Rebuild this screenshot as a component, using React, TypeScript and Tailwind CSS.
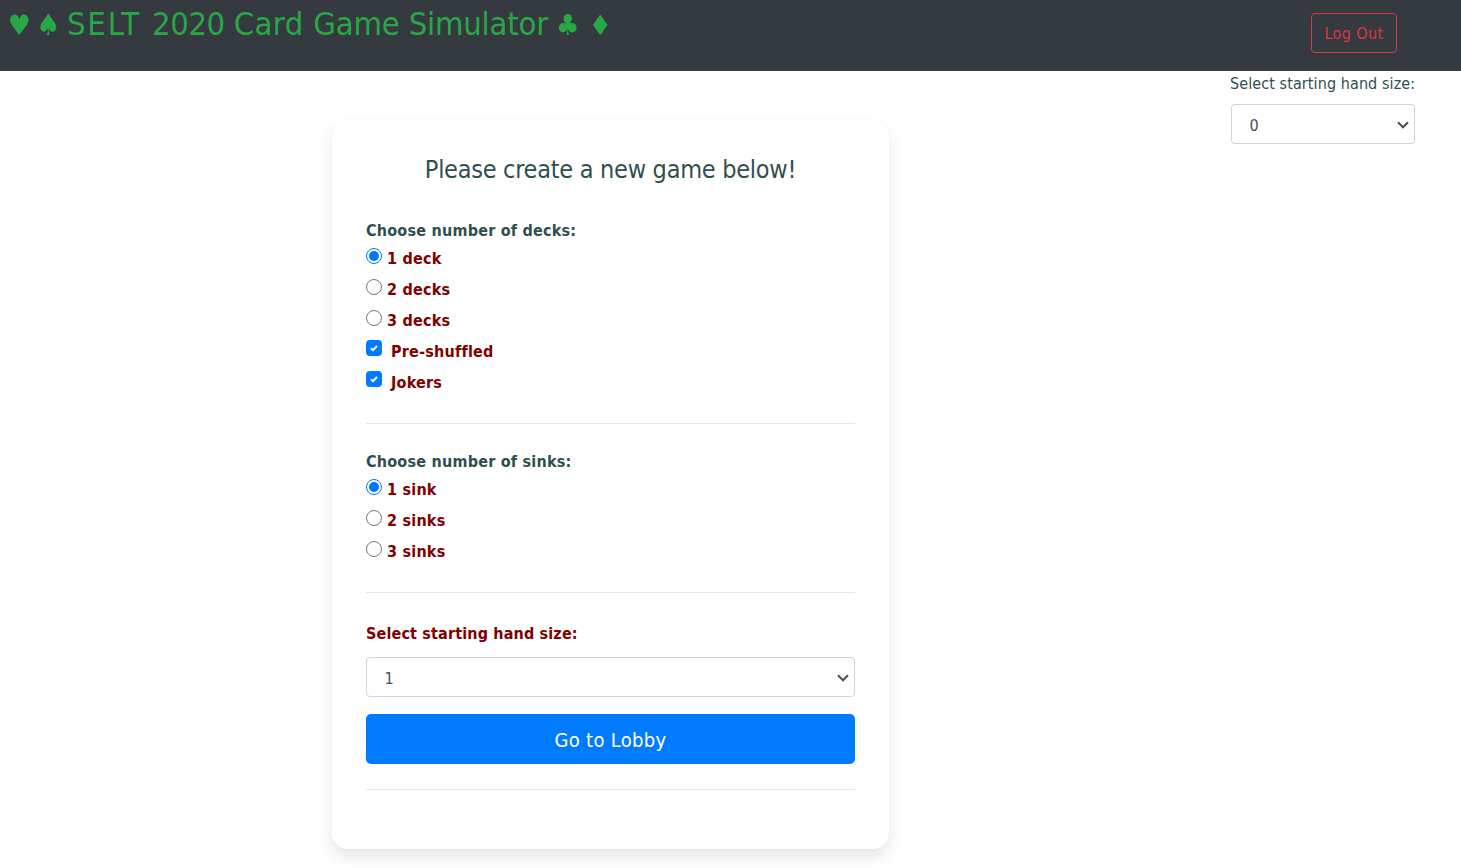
import React from "react";

function Chevron() {
  return (
    <svg className="pointer-events-none mt-0.5 h-2 w-3 shrink-0" viewBox="0 0 12 8" fill="none" stroke="#495057" strokeWidth="2">
      <path d="M1 1.3 L6 6.3 L11 1.3" />
    </svg>
  );
}

function SelectBox({ value }: { value: string }) {
  return (
    <button className="flex h-10 w-full items-center justify-between rounded border border-[#ced4da] bg-white pr-[5px] pl-[17.5px] text-left leading-6 text-[#495057]">
      <span className="pt-[3px]">{value}</span>
      <Chevron />
    </button>
  );
}

function Radio({ label, checked = false }: { label: string; checked?: boolean }) {
  return (
    <label className="flex h-[31px] items-start gap-[5px]">
      <svg className="h-4 w-4 shrink-0" viewBox="0 0 16 16">
        <circle cx="8" cy="8" r="7.5" fill="#fff" stroke={checked ? "#0075ff" : "#767676"} />
        {checked && <circle cx="8" cy="8" r="5" fill="#0075ff" />}
      </svg>
      <span className="-mt-px leading-6 text-[#800000]">{label}</span>
    </label>
  );
}

function Check({ label }: { label: string }) {
  return (
    <label className="flex h-[31px] items-start gap-[9px]">
      <svg className="-mt-px h-4 w-4 shrink-0" viewBox="0 0 16 16">
        <rect width="16" height="16" rx="4" fill="#007bff" />
        <path d="M4.9 8.3 L7 10.2 L11 6" fill="none" stroke="#fff" strokeWidth="1.9" />
      </svg>
      <span className="-mt-px leading-6 text-[#800000]">{label}</span>
    </label>
  );
}

export default function App() {
  return (
    <div className="h-[868px] overflow-hidden bg-white font-['DejaVu_Sans_Condensed','DejaVu_Sans',sans-serif] text-base text-[#2f4f4f]">
      <header className="flex h-[71px] items-start justify-between bg-[#343a40] pr-16 pl-2">
        <h1 className="mt-[5px] flex items-baseline text-[32.5px] leading-[38px] whitespace-nowrap text-[#28a745]">
          <span className="w-[28px] text-[28px]">♥</span>
          <span className="w-[31px] text-[30px]">♠</span>
          <span className="w-[489px]">
            <span className="tracking-[1.8px]">SELT </span>
            <span className="tracking-[-0.4px]">2020 </span>
            <span className="tracking-[0.4px]">Card </span>
            <span className="tracking-[-0.2px]">Game Simulator</span>
          </span>
          <span className="w-[33px] text-[29px]">♣</span>
          <span className="text-[28px]">♦</span>
        </h1>
        <button className="mt-[13px] h-10 w-[86px] rounded border border-[#dc3545] pt-px leading-6 tracking-[0.4px] whitespace-nowrap text-[#dc3545]">Log Out</button>
      </header>
      <div className="flex items-start justify-between pr-[46px] pl-[332px]">
        <main className="mt-[50px] flex h-[728px] w-[557px] flex-col rounded-2xl bg-white px-[34px] shadow-[0_8px_16px_rgba(0,0,0,0.1)]">
          <h2 className="mt-[34px] text-center text-[25px] leading-[30px] tracking-[-0.27px] whitespace-nowrap">Please create a new game below!</h2>
          <section className="mt-[34px] h-[183px] font-bold tracking-[0.22px]">
            <h3 className="h-[29px] leading-6">Choose number of decks:</h3>
            <Radio label="1 deck" checked />
            <Radio label="2 decks" />
            <Radio label="3 decks" />
            <Check label="Pre-shuffled" />
            <Check label="Jokers" />
          </section>
          <hr className="mt-[21px] border-[#e5e5e5]" />
          <section className="mt-[26px] h-[122px] font-bold tracking-[0.22px]">
            <h3 className="h-[29px] leading-6">Choose number of sinks:</h3>
            <Radio label="1 sink" checked />
            <Radio label="2 sinks" />
            <Radio label="3 sinks" />
          </section>
          <hr className="mt-5 border-[#e5e5e5]" />
          <p className="mt-[29px] mb-[11px] leading-6 font-bold tracking-[0.15px] text-[#800000]">Select starting hand size:</p>
          <SelectBox value="1" />
          <button className="mt-[17px] h-[50px] shrink-0 rounded-[5px] bg-[#007bff] pt-px text-xl leading-[30px] tracking-[0.3px] text-white">Go to Lobby</button>
          <hr className="mt-[25px] border-[#e5e5e5]" />
        </main>
        <aside className="w-[184px]">
          <p className="mt-px mb-2 -ml-px leading-6 tracking-[0.09px] whitespace-nowrap">Select starting hand size:</p>
          <SelectBox value="0" />
        </aside>
      </div>
    </div>
  );
}
